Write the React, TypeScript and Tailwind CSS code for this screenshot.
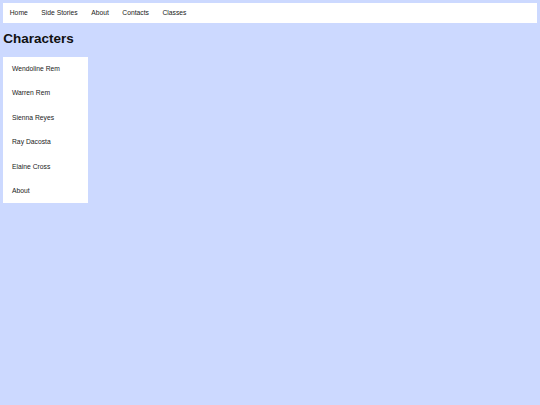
const NAV = ["Home", "Side Stories", "About", "Contacts", "Classes"];
const CHARACTERS = ["Wendoline Rem", "Warren Rem", "Sienna Reyes", "Ray Dacosta", "Elaine Cross", "About"];

export default function App() {
  return (
    <div className="min-h-screen bg-[#ccd9ff] pt-[3px] font-['Liberation_Sans',Arial,sans-serif]">
      <nav className="mx-[3px] flex h-[19.7px] items-center bg-white">
        {NAV.map((item) => (
          <a key={item} className="px-[6.75px] text-[6.75px] text-[#222]">
            {item}
          </a>
        ))}
      </nav>
      <h1 className="mx-[3.3px] mt-[8.8px] mb-[9.7px] text-[13.5px] leading-[15.5px] font-bold text-[#111]">
        Characters
      </h1>
      <aside className="ml-[3px] flex w-[85px] flex-col bg-white">
        {CHARACTERS.map((name) => (
          <div key={name} className="flex h-[24.45px] items-center pl-[9px] text-[6.75px] text-[#222]">
            {name}
          </div>
        ))}
      </aside>
    </div>
  );
}
